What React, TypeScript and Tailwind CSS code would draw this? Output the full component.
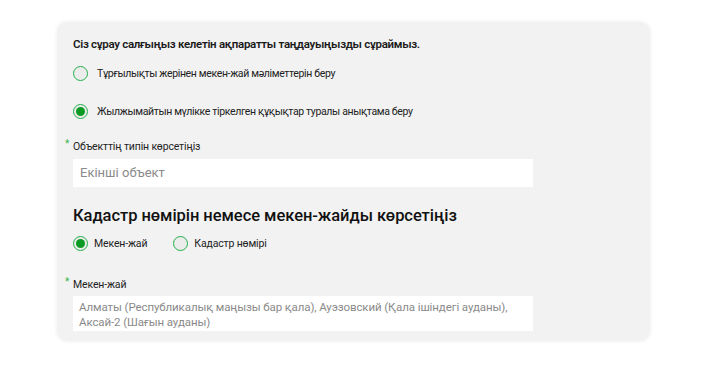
import React from "react";

function Radio({ checked }: { checked: boolean }) {
  return (
    <span className="flex h-[15px] w-[15px] shrink-0 items-center justify-center rounded-full border-[1.5px] border-[#22b04b] bg-[#ececec]">
      {checked && <span className="h-[9px] w-[9px] rounded-full bg-[#0b9a23]" />}
    </span>
  );
}

function Label({ text }: { text: string }) {
  return (
    <div className="relative text-[10.5px] leading-[14px] tracking-[-0.15px] text-[#222]">
      <span className="absolute left-[-8px] top-[-3px] text-[10px] text-[#3bb54a]">*</span>
      {text}
    </div>
  );
}

export default function App() {
  return (
    <div className="h-[365px] w-[707px] bg-white pl-[57px] pt-[22px]" style={{ fontFamily: 'Roboto, "Noto Sans", sans-serif' }}>
      <div className="flex h-[319px] w-[593px] flex-col rounded-[10px] bg-[#f2f2f2] px-[16px] pt-[14px] shadow-[0_0_4px_rgba(0,0,0,0.08)]">
        <div className="text-[11.5px] font-semibold leading-[16px] tracking-[-0.3px] text-[#1a1a1a]">
          Сіз сұрау салғыңыз келетін ақпаратты таңдауыңызды сұраймыз.
        </div>
        <div className="mt-[14px] flex items-center gap-[9px] text-[10.5px] leading-[14px] tracking-[-0.35px] text-[#222]">
          <Radio checked={false} />
          <span>Тұрғылықты жерінен мекен-жай мәліметтерін беру</span>
        </div>
        <div className="mt-[23px] flex items-center gap-[9px] text-[10.5px] leading-[14px] tracking-[-0.35px] text-[#222]">
          <Radio checked={true} />
          <span>Жылжымайтын мүлікке тіркелген құқықтар туралы анықтама беру</span>
        </div>
        <div className="mt-[21px]">
          <Label text="Объекттің типін көрсетіңіз" />
        </div>
        <div className="mt-[5px] flex h-[28px] w-[460px] items-center bg-white px-[7px] text-[13px] text-[#8a8a8a]">
          Екінші объект
        </div>
        <div className="mt-[18px] text-[16.5px] font-medium leading-[22px] tracking-[-0.05px] text-[#111]">
          Кадастр нөмірін немесе мекен-жайды көрсетіңіз
        </div>
        <div className="mt-[9px] flex items-center text-[10.5px] leading-[14px] tracking-[-0.15px] text-[#222]">
          <div className="flex items-center gap-[6px]">
            <Radio checked={true} />
            <span>Мекен-жай</span>
          </div>
          <div className="ml-[26px] flex items-center gap-[6px]">
            <Radio checked={false} />
            <span>Кадастр нөмірі</span>
          </div>
        </div>
        <div className="mt-[27px]">
          <Label text="Мекен-жай" />
        </div>
        <div className="mt-[4px] w-[460px] bg-white px-[6px] pb-[1px] pt-[4px] text-[11.5px] leading-[15px] tracking-[-0.1px] text-[#8a8a8a]">
          <div className="whitespace-nowrap">Алматы (Республикалық маңызы бар қала), Ауэзовский (Қала ішіндегі ауданы),</div>
          <div>Аксай-2 (Шағын ауданы)</div>
        </div>
      </div>
    </div>
  );
}
